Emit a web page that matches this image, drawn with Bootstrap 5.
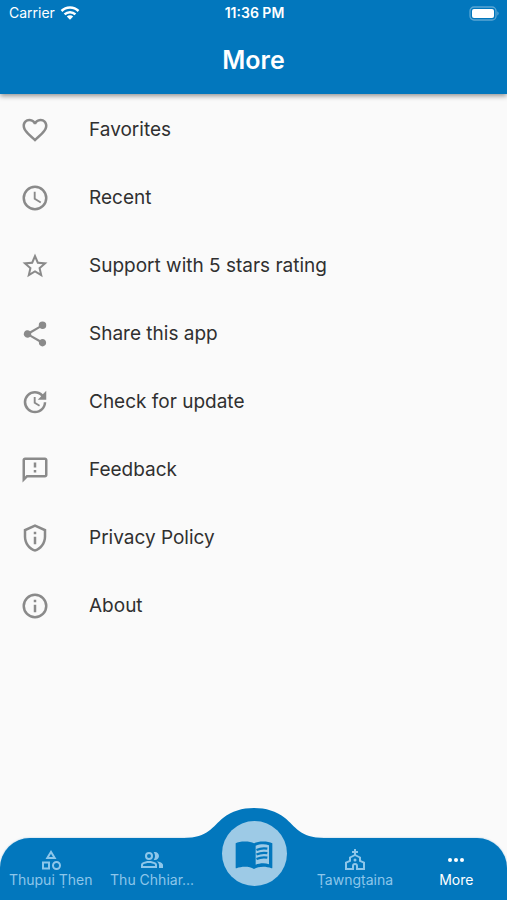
<!DOCTYPE html>
<html lang="en">
<head>
<meta charset="utf-8">
<meta name="viewport" content="width=device-width, initial-scale=1">
<title>More</title>
<link href="https://cdn.jsdelivr.net/npm/bootstrap@5.3.0/dist/css/bootstrap.min.css" rel="stylesheet">
<style>
  :root { --brand: #0277bd; --tint: #8dc6ea; }
  body { font-family: Inter, "Noto Sans", sans-serif; background: #fafafa; color: #303030; }
  svg { display: block; fill: currentColor; flex: none; }
  .app-header { background: var(--brand); box-shadow: 0 2px 5px rgba(0,0,0,.42); z-index: 2; }
  .status { font-size: 14px; line-height: 18px; padding: 4px 7px 0 9px; grid-template-columns: 1fr auto 1fr; }
  .status-time { font-weight: 600; }
  .app-title { font-size: 25px; line-height: 32px; font-weight: 600; padding: 22px 0 18px; }
  .menu-item { height: 68px; padding: 0 20px; gap: 39px; font-size: 19px; background: transparent; color: inherit; }
  .menu-list { padding-top: 2px; }
  .menu-item svg { width: 30px; height: 30px; color: #8a8a8a; }
  .tabs { background: var(--brand); border-radius: 30px 30px 0 0; height: 62px; box-shadow: 0 0 2px rgba(2,119,189,.4); }
  .hump { bottom: 100%; left: 50%; margin: 0 0 -1px -70px; color: var(--brand); }
  .tab { flex: 1 1 0; min-width: 0; color: var(--tint); font-size: 14px; line-height: 20px; padding: 10px 4px 0; }
  .tab svg { width: 24px; height: 24px; margin: 0 auto; }
  .tab.active { color: #fff; }
  .tab-label { margin-top: -2px; }
  .disc { width: 65px; height: 65px; top: -17px; left: 50%; margin-left: -32px; background: #9dcae6; color: var(--brand); }
  .tab .disc svg { width: 40px; height: 40px; margin: 3px 0 0; }
</style>
<script src="https://cdn.jsdelivr.net/npm/bootstrap@5.3.0/dist/js/bootstrap.bundle.min.js"></script>
</head>
<body class="d-flex flex-column min-vh-100 m-0">
<header class="app-header text-white position-relative">
  <div class="status d-grid align-items-center">
    <div class="d-flex align-items-center gap-1"><span>Carrier</span>
      <svg width="22" height="16" viewBox="0 0 22 16" aria-hidden="true"><g fill="none" stroke="currentColor" stroke-width="2.5"><path d="M2.5 6a12 12 0 0 1 17 0M5.6 9.4a7.600 7.600 0 0 1 10.800 0"/></g><path d="M11 14.800 7.800 11.500a4.600 4.600 0 0 1 6.400 0z"/></svg>
    </div>
    <div class="status-time">11:36 PM</div>
    <svg class="ms-auto" width="31" height="15" viewBox="0 0 31 15" aria-hidden="true"><rect x="1" y="1" width="26" height="13" rx="4" fill="none" stroke="#fff" stroke-opacity=".35" stroke-width="1.300"/><rect x="3" y="3" width="22" height="9" rx="2"/><path d="M28.500 5.300q2 2.200 0 4.400z" opacity=".5"/></svg>
  </div>
  <h1 class="app-title text-center m-0">More</h1>
</header>

<main class="menu-list flex-grow-1 d-flex flex-column">
  <button type="button" class="menu-item border-0 d-flex align-items-center text-start w-100"><svg viewBox="0 0 24 24" aria-hidden="true"><path d="M16.500 3c-1.740 0-3.410.81-4.500 2.090C10.910 3.810 9.240 3 7.500 3 4.420 3 2 5.420 2 8.500c0 3.780 3.400 6.860 8.550 11.540L12 21.350l1.450-1.320C18.600 15.360 22 12.280 22 8.500 22 5.420 19.580 3 16.500 3zm-4.400 15.550-.1.100-.1-.1C7.140 14.240 4 11.390 4 8.500 4 6.500 5.500 5 7.500 5c1.540 0 3.040.99 3.570 2.360h1.870C13.460 5.990 14.960 5 16.500 5c2 0 3.500 1.500 3.500 3.500 0 2.890-3.140 5.740-7.900 10.050z"/></svg><span>Favorites</span></button>
  <button type="button" class="menu-item border-0 d-flex align-items-center text-start w-100"><svg viewBox="0 0 24 24" aria-hidden="true"><path d="M12 2a10 10 0 1 0 0 20 10 10 0 0 0 0-20zm0 18a8 8 0 1 1 0-16 8 8 0 0 1 0 16zm.5-13H11v6l5.250 3.150.75-1.230-4.500-2.670z"/></svg><span>Recent</span></button>
  <button type="button" class="menu-item border-0 d-flex align-items-center text-start w-100"><svg viewBox="0 0 24 24" aria-hidden="true"><path d="m22 9.240-7.190-.62L12 2 9.190 8.630 2 9.240l5.460 4.730L5.820 21 12 17.270 18.180 21l-1.630-7.030L22 9.240zM12 15.400l-3.760 2.270 1-4.280-3.320-2.880 4.380-.38L12 6.100l1.710 4.040 4.380.38-3.320 2.880 1 4.280L12 15.400z"/></svg><span>Support with 5 stars rating</span></button>
  <button type="button" class="menu-item border-0 d-flex align-items-center text-start w-100"><svg viewBox="0 0 24 24" aria-hidden="true"><path d="M18 16.080c-.76 0-1.440.3-1.960.77L8.910 12.700c.05-.23.09-.46.09-.7s-.04-.47-.09-.7l7.050-4.110c.54.5 1.250.81 2.040.81a3 3 0 1 0-3-3c0 .24.04.47.09.7L8.040 9.810A3 3 0 1 0 6 15c.79 0 1.500-.31 2.040-.81l7.120 4.160c-.05.21-.08.43-.08.65 0 1.610 1.310 2.920 2.920 2.920s2.920-1.310 2.920-2.920-1.310-2.920-2.920-2.920z"/></svg><span>Share this app</span></button>
  <button type="button" class="menu-item border-0 d-flex align-items-center text-start w-100"><svg viewBox="0 0 24 24" aria-hidden="true"><path d="M21 10.120h-6.780l2.740-2.820c-2.730-2.700-7.150-2.800-9.880-.1a6.875 6.875 0 0 0 0 9.790c2.730 2.710 7.150 2.710 9.880 0C18.320 15.650 19 14.080 19 12.100h2c0 1.980-.88 4.550-2.640 6.290-3.510 3.480-9.210 3.480-12.720 0-3.500-3.470-3.530-9.110-.02-12.580 3.510-3.470 9.140-3.470 12.650 0L21 3v7.120zM12.500 8v4.250l3.500 2.080-.72 1.210L11 13V8h1.500z"/></svg><span>Check for update</span></button>
  <button type="button" class="menu-item border-0 d-flex align-items-center text-start w-100"><svg viewBox="0 0 24 24" aria-hidden="true"><path d="M20 2H4c-1.100 0-1.990.9-1.990 2L2 22l4-4h14c1.100 0 2-.9 2-2V4c0-1.100-.9-2-2-2zm0 14H5.170L4 17.170V4h16v12zm-9-4h2v2h-2zm0-6h2v4h-2z"/></svg><span>Feedback</span></button>
  <button type="button" class="menu-item border-0 d-flex align-items-center text-start w-100"><svg viewBox="0 0 24 24" aria-hidden="true"><path d="M12 1 3 5v6c0 5.550 3.840 10.740 9 12 5.160-1.260 9-6.450 9-12V5l-9-4zm7 10c0 4.520-2.980 8.690-7 9.930-4.020-1.240-7-5.410-7-9.930V6.300l7-3.110 7 3.110V11zm-8-4h2v2h-2zm0 4h2v6h-2z"/></svg><span>Privacy Policy</span></button>
  <button type="button" class="menu-item border-0 d-flex align-items-center text-start w-100"><svg viewBox="0 0 24 24" aria-hidden="true"><path d="M11 7h2v2h-2zm0 4h2v6h-2zm1-9a10 10 0 1 0 0 20 10 10 0 0 0 0-20zm0 18a8 8 0 1 1 0-16 8 8 0 0 1 0 16z"/></svg><span>About</span></button>
</main>

<nav class="tabs position-sticky bottom-0 d-flex text-center" aria-label="Main">
  <svg class="hump position-absolute" width="140" height="32" viewBox="0 0 140 32" aria-hidden="true"><path d="M0 32V31C24 31 29 19 39 11 48 4 58 1 70 1s22 3 31 10c10 8 15 20 39 20v1z"/></svg>
  <a href="#" class="tab text-decoration-none"><svg viewBox="0 0 24 24" aria-hidden="true"><path d="m12 2-5.500 9h11L12 2zm0 3.840L13.930 9h-3.870L12 5.840zM17.500 13a4.500 4.500 0 1 0 0 9 4.500 4.500 0 0 0 0-9zm0 7a2.500 2.500 0 1 1 0-5 2.500 2.500 0 0 1 0 5zM3 21.500h8v-8H3v8zm2-6h4v4H5v-4z"/></svg><div class="tab-label text-nowrap">Thupui Ṭhen</div></a>
  <a href="#" class="tab text-decoration-none"><svg viewBox="0 0 24 24" aria-hidden="true"><path d="M9 4a4 4 0 1 0 0 8 4 4 0 0 0 0-8zm0 6a2 2 0 1 1 0-4 2 2 0 0 1 0 4zM15.390 14.560C13.710 13.700 11.530 13 9 13s-4.710.7-6.390 1.560C1.610 15.070 1 16.100 1 17.220V20h16v-2.780c0-1.120-.61-2.150-1.610-2.660zM15 18H3v-.78c0-.38.2-.72.520-.88C4.710 15.730 6.630 15 9 15s4.290.73 5.480 1.340c.32.160.52.500.52.880V18zM16.670 13.130C18.040 14.060 19 15.320 19 17v3h4v-3c0-2.180-3.570-3.470-6.330-3.870zM15 12c2.210 0 4-1.790 4-4s-1.790-4-4-4c-.47 0-.91.100-1.330.24C14.500 5.270 15 6.580 15 8s-.5 2.730-1.330 3.760c.42.140.86.240 1.330.24z"/></svg><div class="tab-label text-nowrap">Thu Chhiar...</div></a>
  <a href="#" class="tab text-decoration-none position-relative" aria-label="Read"><span class="disc position-absolute rounded-circle d-flex align-items-center justify-content-center"><svg viewBox="0 0 24 24" aria-hidden="true"><path fill-rule="evenodd" d="M12 5C10.700 4.200 8.800 3.900 6.500 3.900S2.100 4.300 1 5v14.600c0 .3.200.4.500.3 1.500-.6 3.300-.9 5-.9 2.100 0 4 .3 5.500 1.400 1.500-1 3.600-1.400 5.500-1.400 1.700 0 3.400.3 5 .9.300.1.500-.1.500-.3V5c-1.400-.8-3.400-1.100-5.500-1.100S13.400 4.200 12 5zm1 1.500c1.400-.7 3-.9 4.500-.9 1.200 0 2.400.1 3.500.5v11.400c-1.100-.4-2.300-.5-3.500-.5-1.600 0-3.100.3-4.500.9V6.500z"/><path fill="none" stroke="currentColor" stroke-width="1.300" d="M13.500 9q3-1.400 6.500-.8M13.500 11.700q3-1.400 6.500-.8M13.500 14.400q3-1.400 6.500-.8"/></svg></span></a>
  <a href="#" class="tab text-decoration-none"><svg viewBox="0 0 24 24" aria-hidden="true"><path d="M18 12.220V9l-5-2.500V5h2V3h-2V1h-2v2H9v2h2v1.500L6 9v3.220L2 14v8h9v-4c0-.55.450-1 1-1s1 .45 1 1v4h9v-8l-4-1.780zM20 20h-5v-2.040A2.980 2.980 0 0 0 12 15a2.980 2.980 0 0 0-3 2.960V20H4v-4.790l4-1.810v-3.350L12 8l4 2.040v3.350l4 1.810V20z"/><circle cx="12" cy="12" r="1.500"/></svg><div class="tab-label text-nowrap">Ṭawngṭaina</div></a>
  <a href="#" class="tab active text-decoration-none" aria-current="page"><svg viewBox="0 0 24 24" aria-hidden="true"><circle cx="6" cy="12" r="2"/><circle cx="12" cy="12" r="2"/><circle cx="18" cy="12" r="2"/></svg><div class="tab-label text-nowrap">More</div></a>
</nav>
</body>
</html>
